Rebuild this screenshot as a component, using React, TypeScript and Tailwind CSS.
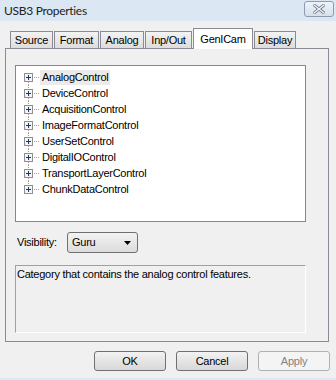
const tabs = [
  { label: "Source", w: "w-[43px]" },
  { label: "Format", w: "w-[45px]" },
  { label: "Analog", w: "w-[44px]" },
  { label: "Inp/Out", w: "w-[47px]" },
  { label: "GenICam", w: "w-[60px]", active: true },
  { label: "Display", w: "w-[42px]" },
];

const nodes = [
  "AnalogControl",
  "DeviceControl",
  "AcquisitionControl",
  "ImageFormatControl",
  "UserSetControl",
  "DigitalIOControl",
  "TransportLayerControl",
  "ChunkDataControl",
];

function Expander({ first, last }: { first: boolean; last: boolean }) {
  return (
    <svg width="16" height="16" className="shrink-0" shapeRendering="crispEdges">
      {!first && <line x1="4.5" y1="0" x2="4.5" y2="3" stroke="#a0a0a0" strokeDasharray="1 1" />}
      {!last && <line x1="4.5" y1="13" x2="4.5" y2="16" stroke="#a0a0a0" strokeDasharray="1 1" />}
      <line x1="10" y1="8.5" x2="16" y2="8.5" stroke="#a0a0a0" strokeDasharray="1 1" />
      <rect x="0.5" y="4.5" width="8" height="8" fill="#f4f4f4" stroke="#8f8f8f" />
      <line x1="2" y1="8.5" x2="7" y2="8.5" stroke="#1f3560" />
      <line x1="4.5" y1="6" x2="4.5" y2="11" stroke="#1f3560" />
    </svg>
  );
}

export default function App() {
  return (
    <div
      className="w-[336px] h-[380px] bg-[#f0f0f0] flex flex-col text-[11px] tracking-[-0.25px] text-black overflow-hidden"
      style={{ fontFamily: '"Liberation Sans", Arial, sans-serif' }}
    >
      {/* title bar */}
      <div className="h-[21px] bg-[#dce7f4] flex items-center justify-between pl-[4px] pr-[2px]">
        <span className="text-[12px] tracking-[-0.3px] text-[#222]" style={{ fontFamily: "Lato, sans-serif" }}>
          USB3 Properties
        </span>
        <div className="w-[30px] h-[16px] -mt-[3px] border border-[#8d9bb0] rounded-[3px] bg-gradient-to-b from-[#eef3f9] to-[#d6e0ec] flex items-center justify-center">
          <svg width="12" height="10" viewBox="0 0 12 10">
            <path d="M1 1 L11 9 M11 1 L1 9" stroke="#6f7784" strokeWidth="3" strokeLinecap="square" />
            <path d="M1 1 L11 9 M11 1 L1 9" stroke="#f4f6f9" strokeWidth="1.4" strokeLinecap="square" />
          </svg>
        </div>
      </div>

      {/* tabs */}
      <div className="h-[27px] flex items-end pl-[10px] gap-px">
        {tabs.map((t) =>
          t.active ? (
            <div
              key={t.label}
              className={`${t.w} h-[21px] -mb-px relative z-10 bg-white border border-b-0 border-[#898c95] flex items-start justify-center pt-[2px]`}
            >
              {t.label}
            </div>
          ) : (
            <div
              key={t.label}
              className={`${t.w} h-[17px] border border-b-0 border-[#898c95] bg-gradient-to-b from-[#f3f3f3] to-[#dddddd] flex items-center justify-center`}
            >
              {t.label}
            </div>
          )
        )}
      </div>

      {/* tab page */}
      <div className="ml-[5px] w-[324px] h-[294px] border border-[#898c95] bg-[#f0f0f0] flex flex-col pl-[9px] pt-[16px]">
        <div className="w-[291px] h-[157px] border border-[#828790] bg-white pl-[8px] pt-[3px] flex flex-col">
          {nodes.map((n, i) => (
            <div key={n} className="h-[16px] flex items-center">
              <Expander first={i === 0} last={i === nodes.length - 1} />
              <span className={`px-[2px] leading-[15px] ${i === 0 ? "bg-[#ebebeb]" : ""}`}>{n}</span>
            </div>
          ))}
        </div>

        <div className="mt-[10px] h-[21px] flex items-center">
          <span className="ml-[2px] w-[50px]">Visibility:</span>
          <div className="w-[71px] h-[21px] border border-[#707070] rounded-[3px] bg-gradient-to-b from-[#f3f3f3] to-[#dcdcdc] flex items-center justify-between pl-[4px] pr-[6px]">
            <span>Guru</span>
            <svg width="7" height="4" viewBox="0 0 7 4">
              <path d="M0 0 H7 L3.5 4 Z" fill="#000" />
            </svg>
          </div>
        </div>

        <div className="mt-[12px] w-[291px] h-[68px] border border-[#a0a0a0] border-r-white border-b-white px-[1px] pt-px leading-[14px]">
          Category that contains the analog control features.
        </div>
      </div>

      {/* buttons */}
      <div className="mt-[9px] h-[20px] flex justify-end gap-[10px] pr-[6px]">
        <button className="w-[72px] h-[20px] border border-[#707070] rounded-[3px] bg-gradient-to-b from-[#f2f2f2] to-[#d8d8d8]">
          OK
        </button>
        <button className="w-[72px] h-[20px] border border-[#707070] rounded-[3px] bg-gradient-to-b from-[#f2f2f2] to-[#d8d8d8]">
          Cancel
        </button>
        <button className="w-[72px] h-[20px] border border-[#adb2b5] rounded-[3px] bg-[#f4f4f4] text-[#838383]">
          Apply
        </button>
      </div>

      <div className="mt-auto h-[2px] bg-[#dce7f4]" />
    </div>
  );
}
